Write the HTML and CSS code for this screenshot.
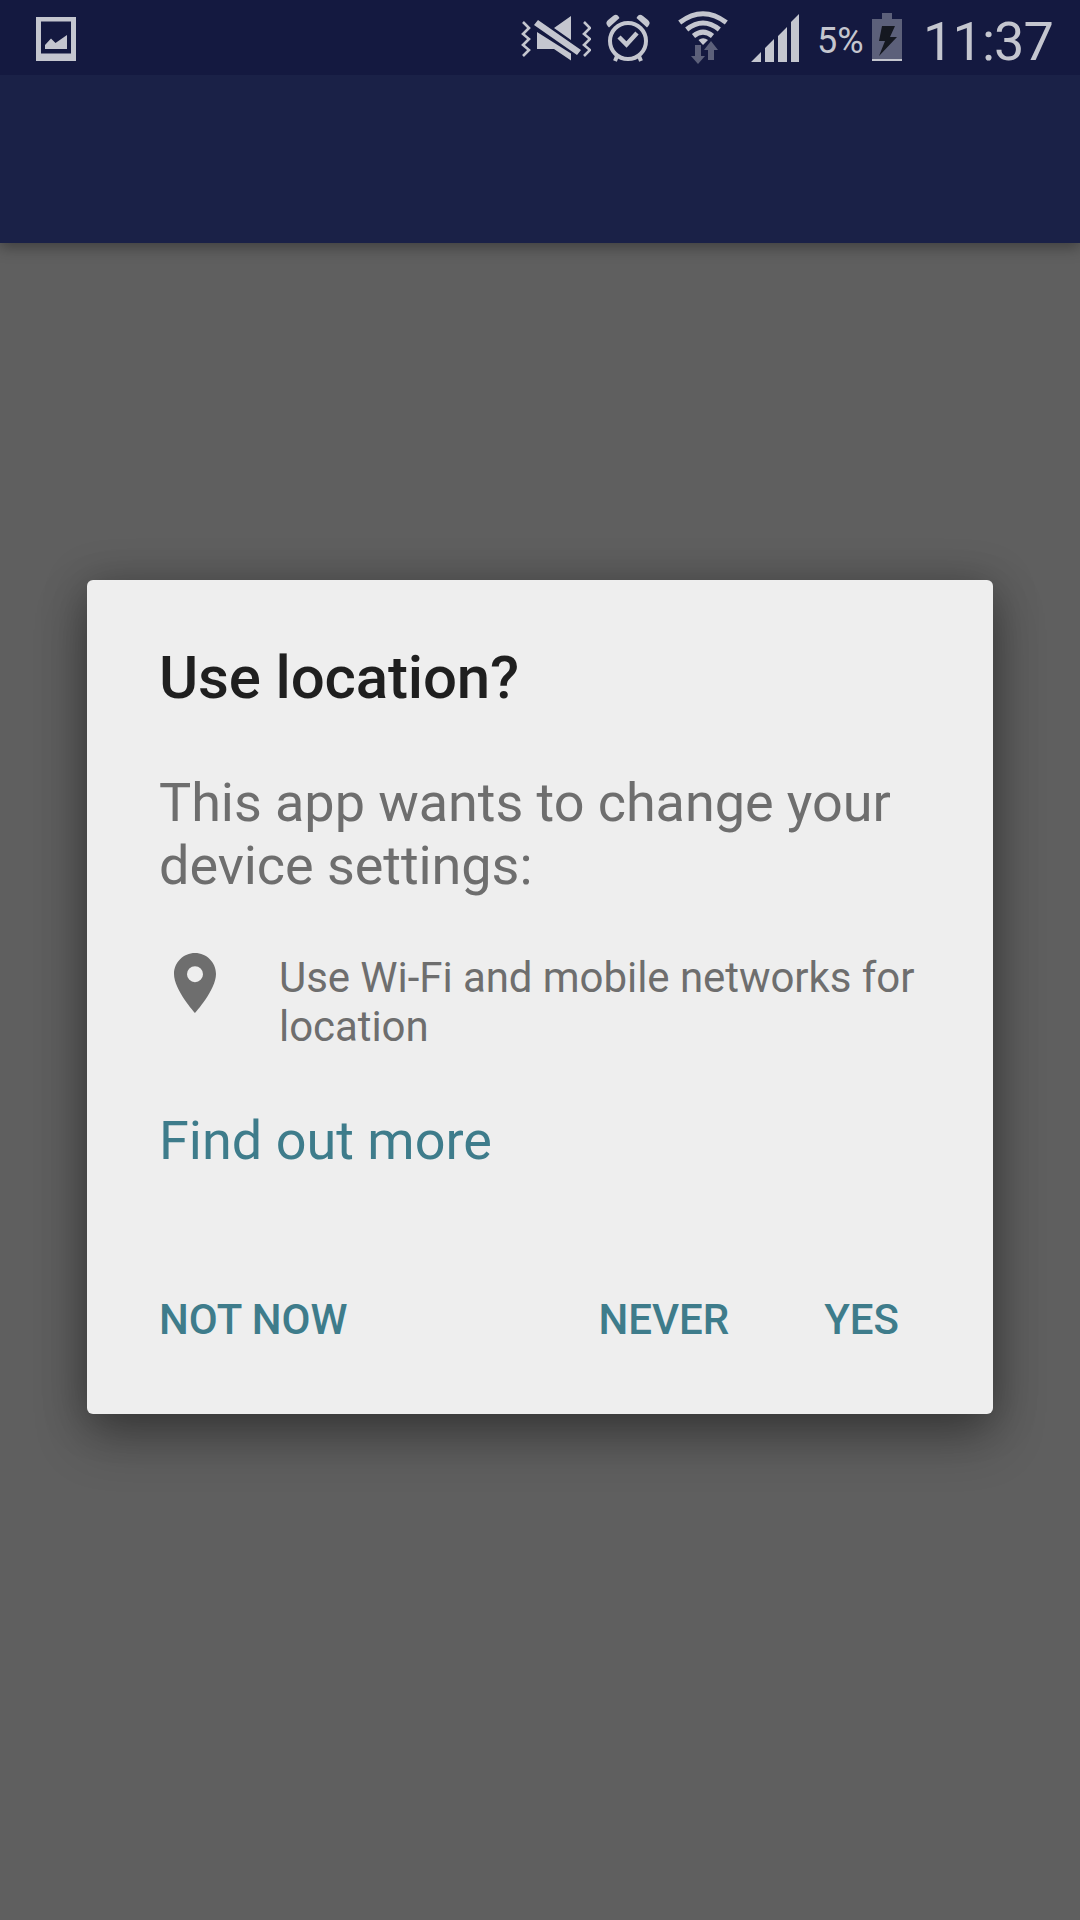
FILE: index.html
```html
<!DOCTYPE html>
<html lang="en">
<head>
<meta charset="utf-8">
<title>Use location?</title>
<link rel="stylesheet" href="styles.css">
</head>
<body>
<div class="screen">
  <header class="app-bar">
    <div class="status-bar">
      <svg class="icon-image" width="40" height="44" viewBox="0 0 40 44"><path fill-rule="evenodd" d="M0 0h40v44H0zM5 4.500v32h30v-32z"/><path d="M9 28l6-6.500 4.500 4.500L31 18v14H9z"/></svg>
      <svg class="icon-mute" width="70" height="46" viewBox="0 0 70 46"><path class="line" d="M2 6l6 6-6 6 6 5-6 6 6 5-6 6M63 6l6 6-6 6 6 5-6 6 6 5-6 6"/><path d="M17 4l43 30-4 5L13 9zM50 0v24L33 12zM16 16l34 21.500v7L33 33H16z"/></svg>
      <svg class="icon-alarm" width="44" height="48" viewBox="0 0 44 48"><circle class="ring" cx="22" cy="27" r="18"/><path d="M3 13.500C-.5 10-.5 8 3 5.200L7 2c3-2 4.500-1.500 6.500 2zM41 13.500c3.500-3.500 3.500-5.500 0-8.300L37 2c-3-2-4.500-1.500-6.500 2z"/><path class="check" d="M13 23l7.500 7.500L31 19"/><path class="foot" d="M11 42l-2 5M33 42l2 5"/></svg>
      <svg class="icon-wifi" width="50" height="54" viewBox="0 0 50 54"><path class="arc" d="M1.700 11.500Q25-6 48.300 11.500M8.700 18.500Q25 5.500 41.300 18.500M15.500 25Q25 17.200 34.500 25"/><path d="M20.500 29q4.500-3.500 9.500 0L25 34z"/><path class="dim" d="M17 34h6v11h4l-7 8-7-8h4zM30 49h6V39h4l-7-9-7 9h4z"/></svg>
      <svg class="icon-signal" width="48" height="48" viewBox="0 0 48 48"><path d="M0 48l10-10v10zM14 48V34l9-9v23zM27 48V22l9-9v35zM40 48V8l8-8v48z"/></svg>
      <span class="percent">5%</span>
      <svg class="icon-battery" width="30" height="48" viewBox="0 0 30 48"><path class="dim" d="M10 0h10v6h10v40H0V6h10z"/><path d="M0 46h30v2H0z"/><path class="bolt" d="M10 13h13l-5 11h7L7 43l6-15H7z"/></svg>
      <span class="clock">11:37</span>
    </div>
  </header>
  <main class="content">
    <section class="dialog" role="dialog">
      <h1 class="title">Use location?</h1>
      <p class="message">This app wants to change your device settings:</p>
      <div class="setting">
        <svg class="pin" width="42" height="60" viewBox="0 0 42 60"><path fill-rule="evenodd" d="M21 0C9.400 0 0 9.400 0 21c0 15.750 21 39 21 39s21-23.250 21-39C42 9.400 32.600 0 21 0zM21 13.200a8 8 0 1 1 0 16 8 8 0 0 1 0-16z"/></svg>
        <p class="setting-text">Use Wi-Fi and mobile networks for location</p>
      </div>
      <a class="more">Find out more</a>
      <div class="actions">
        <button class="action dismiss">NOT NOW</button>
        <button class="action">NEVER</button>
        <button class="action">YES</button>
      </div>
    </section>
  </main>
</div>
</body>
</html>
```
FILE: styles.css
```css
* { box-sizing: border-box; }
body { margin: 0; font-family: Roboto, sans-serif; }
h1, p { margin: 0; }
svg { display: block; flex: none; }

.screen {
  display: flex;
  flex-direction: column;
  width: 1080px;
  height: 1920px;
  overflow: hidden;
  background: #5f5f5f;
}

.app-bar {
  height: 243px;
  background: #1a2147;
  box-shadow: 0 4px 14px rgba(0, 0, 0, .35);
}
.status-bar {
  display: flex;
  align-items: flex-start;
  height: 75px;
  padding-left: 36px;
  background: #141940;
  color: #c4c6cf;
  fill: #c4c6cf;
}
.icon-image { margin-top: 17px; }
.icon-mute { margin: 16px 0 0 445px; }
.icon-alarm { margin: 14px 0 0 15px; }
.icon-wifi { margin: 11px 0 0 28px; }
.icon-signal { margin: 14px 0 0 23px; }
.icon-battery { margin-top: 13px; }
.line, .ring, .check, .foot, .arc { fill: none; stroke: #c4c6cf; }
.line { stroke-width: 2.6; }
.ring { stroke-width: 4; }
.check { stroke-width: 4.5; }
.foot { stroke-width: 4; }
.arc { stroke-width: 5; }
.dim { fill: #5c607a; }
.bolt { fill: #151820; }
.percent {
  width: 55px;
  margin: 20px 0 0 18px;
  font-size: 36px;
  line-height: 42px;
}
.clock {
  margin: 10px 0 0 21px;
  font-size: 54px;
  line-height: 63px;
  letter-spacing: -.9px;
}

.content { padding: 337px 87px 0; }
.dialog {
  height: 834px;
  padding: 63px 72px 0;
  border-radius: 6px;
  background: #eee;
  color: #6e6e6e;
  box-shadow: 0 24px 52px rgba(0, 0, 0, .3), 0 4px 44px rgba(0, 0, 0, .26);
}
.title {
  color: #1f1f1f;
  font-size: 60px;
  font-weight: 500;
  line-height: 70px;
  letter-spacing: -.15px;
}
.message {
  margin-top: 58px;
  font-size: 54px;
  line-height: 63px;
  letter-spacing: -.06px;
}
.setting {
  display: flex;
  gap: 63px;
  margin-top: 56px;
  padding-left: 15px;
}
.pin { fill: #6e6e6e; }
.setting-text { font-size: 42px; line-height: 49px; letter-spacing: -.06px; }
.more {
  display: block;
  margin-top: 58px;
  color: #3e7c8b;
  font-size: 54px;
  line-height: 63px;
}
.actions {
  display: flex;
  gap: 95px;
  margin-top: 123px;
  padding-right: 22px;
}
.action {
  padding: 0;
  border: 0;
  background: none;
  color: #3e7c8b;
  font: 500 42px/49px Roboto, sans-serif;
}
.dismiss { margin-right: auto; }
```
